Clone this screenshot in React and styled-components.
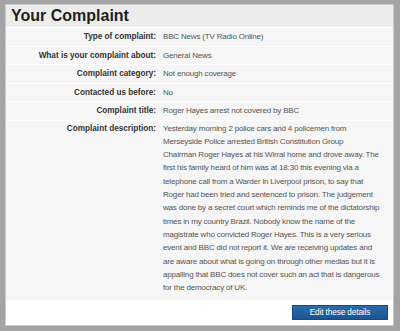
import React from "react";
import styled, { createGlobalStyle } from "styled-components";

const GlobalStyle = createGlobalStyle`
  html, body {
    margin: 0;
    padding: 0;
    background: #a4a4a4;
    font-family: "Liberation Sans", Arial, sans-serif;
  }
`;

const Frame = styled.div`
  width: 400px;
  height: 331px;
  padding: 4px 6px 5px 5px;
  box-sizing: border-box;
`;

const Panel = styled.div`
  height: 100%;
  background: #fff;
  border: 1px solid #c9c9c9;
  box-sizing: border-box;
  display: flex;
  flex-direction: column;
`;

const Header = styled.h1`
  margin: 0;
  height: 22px;
  padding: 0 5px;
  background: #ececec;
  color: #1e1e1e;
  font-size: 16px;
  font-weight: bold;
  line-height: 22px;
`;

const Details = styled.div`
  background: #f6f6f6;
  display: flex;
  flex-direction: column;
`;

const Row = styled.div`
  display: grid;
  grid-template-columns: 150px 1fr;
  column-gap: 7px;
  align-items: start;
  border-top: 1px solid #fff;
  padding: ${(p) => (p.$tall ? "1px 0 5px" : "4px 0 3.5px")};
  font-size: 8px;
  line-height: ${(p) => (p.$tall ? "13.33px" : "10px")};
`;

const Label = styled.div`
  text-align: right;
  font-weight: bold;
  color: #333;
  font-size: 8.2px;
`;

const Value = styled.div`
  color: #555;
  letter-spacing: -0.18px;
`;

const Line = styled.div`
  white-space: nowrap;
`;

const Footer = styled.div`
  flex: 1;
  display: flex;
  justify-content: flex-end;
  align-items: flex-start;
  padding: 5px 5px 0 0;
`;

const Button = styled.button`
  width: 96px;
  height: 15px;
  padding: 0;
  border: 1px solid #154a82;
  background: linear-gradient(#2d6aa8, #1b5492);
  color: #fff;
  font-family: inherit;
  font-size: 8.2px;
  letter-spacing: -0.1px;
  line-height: 13px;
`;

const rows = [
  ["Type of complaint:", "BBC News (TV Radio Online)"],
  ["What is your complaint about:", "General News"],
  ["Complaint category:", "Not enough coverage"],
  ["Contacted us before:", "No"],
  ["Complaint title:", "Roger Hayes arrest not covered by BBC"],
];

const description = [
  "Yesterday morning 2 police cars and 4 policemen from",
  "Merseyside Police arrested British Constitution Group",
  "Chairman Roger Hayes at his Wirral home and drove away. The",
  "first his family heard of him was at 18:30 this evening via a",
  "telephone call from a Warder in Liverpool prison, to say that",
  "Roger had been tried and sentenced to prison. The judgement",
  "was done by a secret court which reminds me of the dictatorship",
  "times in my country Brazil. Nobody know the name of the",
  "magistrate who convicted Roger Hayes. This is a very serious",
  "event and BBC did not report it. We are receiving updates and",
  "are aware about what is going on through other medias but it is",
  "appalling that BBC does not cover such an act that is dangerous",
  "for the democracy of UK.",
];

export default function App() {
  return (
    <>
      <GlobalStyle />
      <Frame>
        <Panel>
          <Header>Your Complaint</Header>
          <Details>
            {rows.map(([label, value]) => (
              <Row key={label}>
                <Label>{label}</Label>
                <Value>{value}</Value>
              </Row>
            ))}
            <Row $tall>
              <Label>Complaint description:</Label>
              <Value>
                {description.map((line) => (
                  <Line key={line}>{line}</Line>
                ))}
              </Value>
            </Row>
          </Details>
          <Footer>
            <Button>Edit these details</Button>
          </Footer>
        </Panel>
      </Frame>
    </>
  );
}
